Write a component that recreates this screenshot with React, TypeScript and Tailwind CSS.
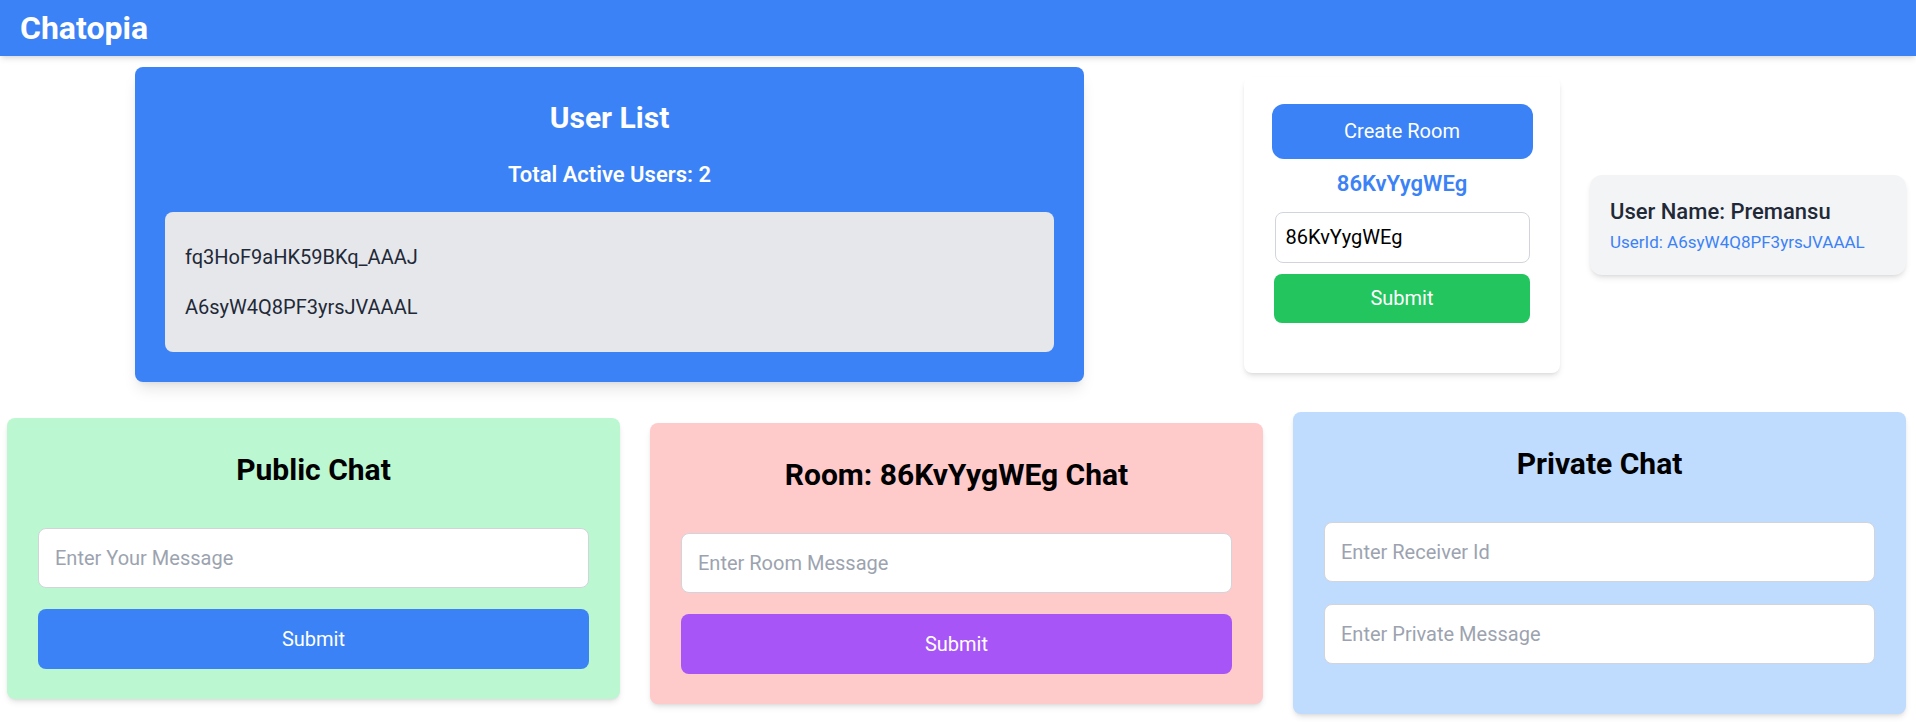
import { useState } from 'react';

const users = ['fq3HoF9aHK59BKq_AAAJ', 'A6syW4Q8PF3yrsJVAAAL'];

const App = () => {
  const [roomId, setRoomId] = useState('86KvYygWEg');

  return (
    <div className="min-h-screen bg-white font-['Roboto',sans-serif]">
      <header className="flex h-14 items-center bg-[#3b82f6] px-5 shadow-md">
        <h1 className="text-[32px] leading-9 font-bold text-white">Chatopia</h1>
      </header>

      <div className="mt-[11px] flex items-center pl-[135px]">
        <div className="w-[949px] rounded-lg bg-[#3b82f6] px-[30px] pt-[33px] pb-[30px] shadow-lg">
          <h2 className="mb-[23px] text-center text-3xl font-bold text-white">User List</h2>
          <h3 className="mb-[21px] text-center text-[22px] leading-8 font-semibold text-white">
            Total Active Users: {users.length}
          </h3>
          <ul className="rounded-lg bg-[#e5e7eb] p-5">
            {users.map((u) => (
              <li key={u} className="py-[11px] text-xl text-[#1f2937]">
                {u}
              </li>
            ))}
          </ul>
        </div>

        <div className="ml-[160px] flex w-[316px] flex-col items-center rounded-lg bg-white pt-[27px] pb-[50px] shadow-md">
          <button className="h-[55px] w-[261px] rounded-xl bg-[#3b82f6] text-xl text-white">
            Create Room
          </button>
          <p className="mt-[11px] text-[22px] leading-7 font-semibold text-[#3b82f6]">86KvYygWEg</p>
          <input
            value={roomId}
            onChange={(e) => setRoomId(e.target.value)}
            className="mt-[14px] h-[51px] w-[255px] rounded-lg border border-[#d1d5db] px-[10px] text-xl text-black outline-none"
          />
          <button className="mt-[11px] h-[49px] w-[256px] rounded-lg bg-[#22c55e] text-xl text-white">
            Submit
          </button>
        </div>

        <div className="ml-[30px] w-[316px] rounded-xl bg-[#f3f4f6] px-5 pt-[23px] pb-[19px] shadow-md">
          <p className="text-[22px] leading-7 font-medium text-[#1f2937]">User Name: Premansu</p>
          <p className="mt-[2px] text-[17px] leading-7 text-[#3b82f6]">UserId: A6syW4Q8PF3yrsJVAAAL</p>
        </div>
      </div>

      <div className="mt-[30px] flex items-center gap-[30px] pr-[10px] pl-[7px]">
        <div className="mb-[10px] flex-1 rounded-lg bg-[#bbf7d0] px-[31px] pt-[34px] pb-[30px] shadow-md">
          <h2 className="mb-10 text-center text-3xl font-bold text-black">Public Chat</h2>
          <input
            placeholder="Enter Your Message"
            className="mb-[21px] h-[60px] w-full rounded-lg border border-[#d1d5db] bg-white px-4 text-xl outline-none placeholder:text-[#9ca3af]"
          />
          <button className="h-[60px] w-full rounded-lg bg-[#3b82f6] text-xl text-white">Submit</button>
        </div>

        <div className="flex-1 rounded-lg bg-[#fecaca] px-[31px] pt-[34px] pb-[30px] shadow-md">
          <h2 className="mb-10 text-center text-3xl font-bold text-black">Room: 86KvYygWEg Chat</h2>
          <input
            placeholder="Enter Room Message"
            className="mb-[21px] h-[60px] w-full rounded-lg border border-[#d1d5db] bg-white px-4 text-xl outline-none placeholder:text-[#9ca3af]"
          />
          <button className="h-[60px] w-full rounded-lg bg-[#a855f7] text-xl text-white">Submit</button>
        </div>

        <div className="flex-1 rounded-lg bg-[#bfdbfe] px-[31px] pt-[34px] pb-[30px] shadow-md">
          <h2 className="mb-10 text-center text-3xl font-bold text-black">Private Chat</h2>
          <input
            placeholder="Enter Receiver Id"
            className="mb-[22px] h-[60px] w-full rounded-lg border border-[#d1d5db] bg-white px-4 text-xl outline-none placeholder:text-[#9ca3af]"
          />
          <input
            placeholder="Enter Private Message"
            className="mb-5 h-[60px] w-full rounded-lg border border-[#d1d5db] bg-white px-4 text-xl outline-none placeholder:text-[#9ca3af]"
          />
        </div>
      </div>
    </div>
  );
};

export default App;
